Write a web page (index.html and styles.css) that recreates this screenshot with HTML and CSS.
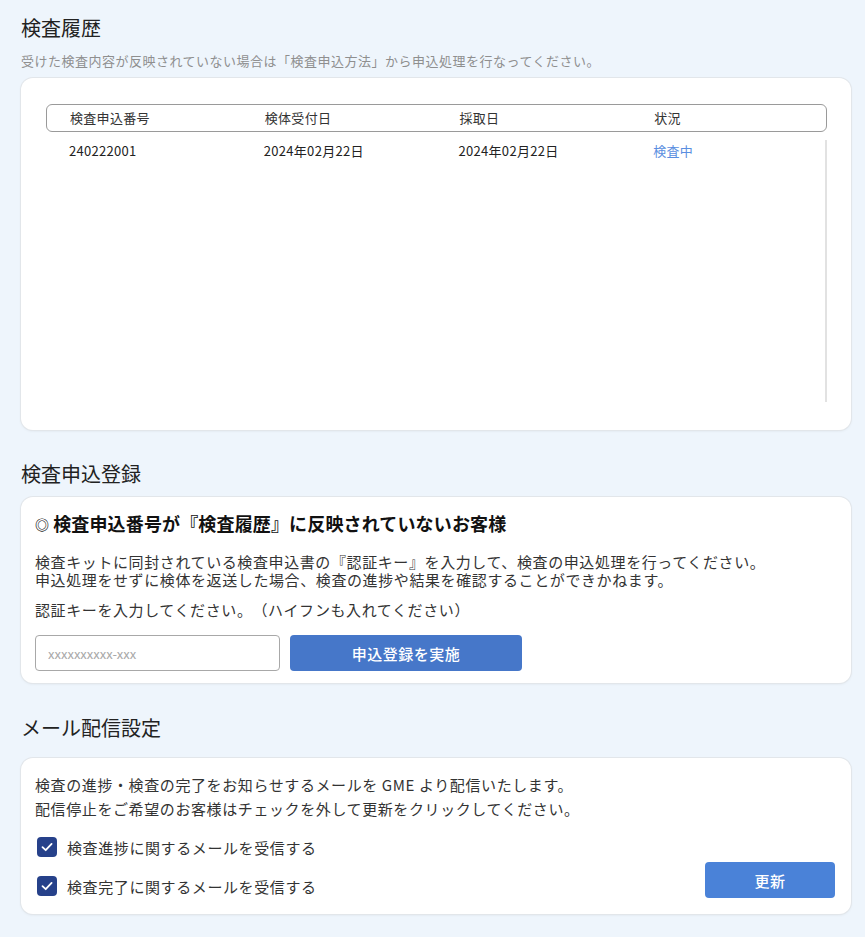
FILE: index.html
```html
<!DOCTYPE html>
<html lang="ja">
<head>
<meta charset="utf-8">
<title>検査履歴</title>
<link rel="stylesheet" href="styles.css">
</head>
<body>
<div class="page">
  <h2 class="section-title first">検査履歴</h2>
  <p class="subtitle">受けた検査内容が反映されていない場合は「検査申込方法」から申込処理を行なってください。</p>
  <div class="card history">
    <div class="table-head">
      <div class="cell">検査申込番号</div>
      <div class="cell">検体受付日</div>
      <div class="cell">採取日</div>
      <div class="cell">状況</div>
    </div>
    <div class="table-body">
      <div class="row">
        <div class="cell">240222001</div>
        <div class="cell">2024年02月22日</div>
        <div class="cell">2024年02月22日</div>
        <div class="cell status">検査中</div>
      </div>
    </div>
  </div>

  <h2 class="section-title second">検査申込登録</h2>
  <div class="card register">
    <h3 class="reg-heading"><span class="mark">◎</span>検査申込番号が『検査履歴』に反映されていないお客様</h3>
    <p class="reg-text">検査キットに同封されている検査申込書の『認証キー』を入力して、検査の申込処理を行ってください。<br>申込処理をせずに検体を返送した場合、検査の進捗や結果を確認することができかねます。</p>
    <p class="reg-label">認証キーを入力してください。（ハイフンも入れてください）</p>
    <div class="reg-form">
      <input class="key-input" type="text" placeholder="xxxxxxxxxx-xxx">
      <button class="btn btn-register" type="button">申込登録を実施</button>
    </div>
  </div>

  <h2 class="section-title third">メール配信設定</h2>
  <div class="card mail">
    <p class="mail-text">検査の進捗・検査の完了をお知らせするメールを GME より配信いたします。<br>配信停止をご希望のお客様はチェックを外して更新をクリックしてください。</p>
    <div class="mail-bottom">
      <div class="checks">
        <label class="check-row"><span class="checkbox"><svg viewBox="0 0 20 20" width="20" height="20"><path d="M5.5 10.2 L8.7 13.2 L14.6 6.9" fill="none" stroke="#fff" stroke-width="1.8" stroke-linecap="round" stroke-linejoin="round"/></svg></span><span class="check-label">検査進捗に関するメールを受信する</span></label>
        <label class="check-row"><span class="checkbox"><svg viewBox="0 0 20 20" width="20" height="20"><path d="M5.5 10.2 L8.7 13.2 L14.6 6.9" fill="none" stroke="#fff" stroke-width="1.8" stroke-linecap="round" stroke-linejoin="round"/></svg></span><span class="check-label">検査完了に関するメールを受信する</span></label>
      </div>
      <button class="btn btn-update" type="button">更新</button>
    </div>
  </div>
</div>
</body>
</html>
```
FILE: styles.css
```css
html, body {
  margin: 0;
  padding: 0;
  background: #eef5fc;
}
body {
  font-family: "Noto Sans CJK JP", "Noto Sans", sans-serif;
  color: #222;
  text-spacing-trim: space-all;
}
.page {
  padding: 0 14px 22px 21px;
}
.section-title {
  margin: 0;
  font-size: 20px;
  line-height: 28px;
  font-weight: 400;
  color: #222;
}
.section-title.first { padding-top: 14px; }
.section-title.second { margin-top: 30px; }
.section-title.third { margin-top: 31px; }
.subtitle {
  margin: 9px 0 0;
  font-size: 13px;
  line-height: 20px;
  letter-spacing: 0.5px;
  color: #8f8f8f;
}
.card {
  background: #fff;
  border-radius: 12px;
  box-shadow: 0 0 0 1px #e2e6ea, 0 1px 3px rgba(0, 0, 0, 0.08);
}
.history {
  margin-top: 7px;
  padding: 26px 24px 28px 25px;
}
.table-head {
  display: grid;
  grid-template-columns: repeat(4, 1fr);
  height: 26px;
  align-items: center;
  border: 1px solid #9a9a9a;
  border-radius: 6px;
}
.cell {
  padding-left: 23px;
  font-size: 13px;
  letter-spacing: 0.3px;
  line-height: 20px;
  color: #333;
}
.table-body {
  margin-top: 8px;
  height: 262px;
  border-right: 2px solid #e2e2e2;
}
.row {
  display: grid;
  grid-template-columns: repeat(4, 1fr);
  height: 22px;
  align-items: center;
}
.row .cell { color: #222; }
.row .status { color: #5a8ee0; }
.register {
  margin-top: 9px;
  padding: 13px 16px 12px 14px;
}
.reg-heading {
  margin: 0;
  height: 26px;
  font-size: 18px;
  line-height: 26px;
  font-weight: 700;
  letter-spacing: 0.15px;
  color: #111;
}
.mark {
  font-size: 14px;
  line-height: 0;
  margin-right: 4px;
  vertical-align: 1px;
}
.reg-text {
  margin: 17px 0 0;
  font-size: 15px;
  line-height: 18px;
  letter-spacing: 0.6px;
  color: #333;
}
.reg-label {
  margin: 12px 0 0;
  font-size: 15px;
  line-height: 18px;
  letter-spacing: 0.6px;
  color: #333;
}
.reg-form {
  display: flex;
  gap: 10px;
  margin-top: 16px;
}
.key-input {
  box-sizing: border-box;
  width: 245px;
  height: 36px;
  padding: 0 12px;
  border: 1px solid #a8a8a8;
  border-radius: 4px;
  font-family: "Noto Sans CJK JP", "Noto Sans", sans-serif;
  font-size: 13px;
  color: #333;
  background: #fff;
}
.key-input::placeholder {
  color: #a8a8a8;
}
.btn {
  border: none;
  border-radius: 4px;
  color: #fff;
  font-family: "Noto Sans CJK JP", "Noto Sans", sans-serif;
  font-size: 15px;
  font-weight: 500;
  letter-spacing: 0.5px;
  cursor: pointer;
}
.btn-register {
  width: 232px;
  height: 36px;
  background: #4677c9;
}
.mail {
  margin-top: 16px;
  padding: 15px 16px 14px 14px;
}
.mail-text {
  margin: 0;
  font-size: 15px;
  line-height: 24px;
  letter-spacing: 0.6px;
  color: #333;
}
.mail-bottom {
  display: flex;
  justify-content: space-between;
  align-items: flex-end;
  margin-top: 12px;
}
.checks {
  display: flex;
  flex-direction: column;
  gap: 11px;
}
.check-row {
  display: flex;
  align-items: center;
  height: 28px;
  gap: 10px;
  padding-left: 2px;
}
.checkbox {
  display: flex;
  width: 20px;
  height: 20px;
  border-radius: 4px;
  background: #26418a;
}
.check-label {
  font-size: 15px;
  letter-spacing: 0.6px;
  color: #333;
}
.btn-update {
  width: 130px;
  height: 36px;
  margin-bottom: 2px;
  background: #4a82d8;
}
```
